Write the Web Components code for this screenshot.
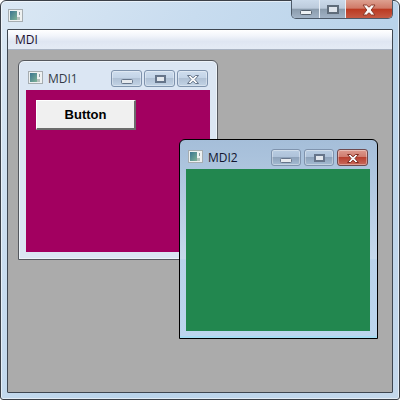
<!DOCTYPE html>
<html>
<head>
<meta charset="utf-8">
<title>MDI</title>
<style>
    html, body { margin: 0; padding: 0; background: #ffffff; }
    body { width: 400px; height: 400px; overflow: hidden; font-family: "Open Sans", sans-serif; }
</style>
</head>
<body>
<app-window>
    <menu-bar slot="menu">MDI</menu-bar>
    <mdi-child title-text="MDI1" x="18" y="60" color="#a20060" state="inactive">
        <push-button>Button</push-button>
    </mdi-child>
    <mdi-child title-text="MDI2" x="179" y="139" color="#22874f" state="active"></mdi-child>
</app-window>

<script>
const iconTemplate = document.createElement('template');
iconTemplate.innerHTML = /*html*/`
    <style>
        :host { display: block; width: 15px; height: 13px; }
        svg { display: block; }
    </style>
    <svg width="15" height="13" viewBox="0 0 15 13">
        <defs>
            <linearGradient id="g" x1="0" y1="0" x2="1" y2="1">
                <stop offset="0" stop-color="#3a7590"/>
                <stop offset="1" stop-color="#7fb296"/>
            </linearGradient>
        </defs>
        <rect x="0.5" y="0.5" width="14" height="12" fill="#eef1f1" stroke="#a6adb1"/>
        <rect x="2" y="2" width="7" height="9" fill="url(#g)"/>
        <rect x="9" y="8" width="3" height="3" fill="#b4c1bd"/>
        <rect x="11" y="3" width="1" height="3" fill="#8a99a0"/>
    </svg>
`;
class AppIcon extends HTMLElement {
    constructor() {
        super();
        this.attachShadow({ mode: 'open' });
        this.shadowRoot.appendChild(iconTemplate.content.cloneNode(true));
    }
}
customElements.define('app-icon', AppIcon);

const glyphs = {
    min: (c) => `<rect x="8.500" y="7.500" width="11" height="4" rx="1" fill="#e6eaee" stroke="${c}"/>`,
    max: (c) => `<rect x="9" y="3" width="11" height="8" fill="${c}"/><rect x="11" y="5" width="7" height="4" fill="#e2e7ed"/>`,
    close: (c) => `<path d="M8.500 3.500h3l2.500 2.200 2.500-2.200h3l-3.500 4 3.500 4h-3l-2.500-2.200-2.500 2.200h-3l3.500-4z" fill="#f7f8f9" stroke="${c}" stroke-width="1"/>`
};

const capButtonTemplate = document.createElement('template');
capButtonTemplate.innerHTML = /*html*/`
    <style>
        :host {
            display: flex;
            align-items: center;
            justify-content: center;
            box-sizing: border-box;
            height: 17px;
            width: 31px;
            border: 1px solid #7f93ad;
            border-radius: 3px;
            box-shadow: inset 0 0 0 1px rgba(255,255,255,0.35);
            background: linear-gradient(#cfdeee 0, #c3d4e7 45%, #b0c1d5 50%, #c2d3e5 100%);
        }
        :host([state="active"]) {
            width: 30px;
            background: linear-gradient(#b9cde2 0, #aec2d9 45%, #8ea3bb 50%, #a4bbd2 100%);
        }
        :host([kind="close"][state="active"]) {
            width: 31px;
            border-color: #6e4a4f;
            background: linear-gradient(#dd9a8e 0, #cf7b6e 45%, #b8402f 50%, #c96a5c 100%);
        }
        svg { display: block; }
    </style>
    <svg width="28" height="14" viewBox="0 0 28 14"></svg>
`;
class CapButton extends HTMLElement {
    constructor() {
        super();
        this.attachShadow({ mode: 'open' });
        this.shadowRoot.appendChild(capButtonTemplate.content.cloneNode(true));
    }
    connectedCallback() {
        const kind = this.getAttribute('kind');
        const active = this.getAttribute('state') === 'active';
        const stroke = kind === 'close' && active ? '#7d2a20' : '#66758a';
        this.shadowRoot.querySelector('svg').innerHTML = glyphs[kind](stroke);
    }
}
customElements.define('cap-button', CapButton);

const menuTemplate = document.createElement('template');
menuTemplate.innerHTML = /*html*/`
    <style>
        :host {
            display: flex;
            align-items: center;
            box-sizing: border-box;
            height: 20px;
            padding: 0 7px 1px;
            font: 12px "Open Sans", sans-serif;
            color: #1a1030;
            border-bottom: 1px solid #a9b3c2;
            background: linear-gradient(#ffffff 0, #f2f5fb 30%, #dfe6f2 60%, #e4ebf5 100%);
        }
    </style>
    <slot></slot>
`;
class MenuBar extends HTMLElement {
    constructor() {
        super();
        this.attachShadow({ mode: 'open' });
        this.shadowRoot.appendChild(menuTemplate.content.cloneNode(true));
    }
}
customElements.define('menu-bar', MenuBar);

const buttonTemplate = document.createElement('template');
buttonTemplate.innerHTML = /*html*/`
    <style>
        :host {
            display: flex;
            align-items: center;
            justify-content: center;
            box-sizing: border-box;
            width: 100px;
            height: 30px;
            font: bold 13px "Liberation Sans", sans-serif;
            color: #000000;
            background: #f0f0f0;
            border: 1px solid;
            border-color: #ffffff #6b6b6b #6b6b6b #ffffff;
            border-width: 1px 2px 2px 1px;
        }
    </style>
    <slot></slot>
`;
class PushButton extends HTMLElement {
    constructor() {
        super();
        this.attachShadow({ mode: 'open' });
        this.shadowRoot.appendChild(buttonTemplate.content.cloneNode(true));
    }
}
customElements.define('push-button', PushButton);

const childTemplate = document.createElement('template');
childTemplate.innerHTML = /*html*/`
    <style>
        :host {
            position: absolute;
            display: flex;
            flex-direction: column;
            box-sizing: border-box;
            width: 200px;
            height: 200px;
            border: 1px solid #55585e;
            border-radius: 6px 6px 0 0;
            background: #dbe6f3;
            box-shadow: inset 0 0 0 1px rgba(255,255,255,0.5);
        }
        :host([state="active"]) {
            border-color: #000000;
            width: 199px;
            background: linear-gradient(#a5bed9 0, #c6d9ec 60%, #b9d2ea 60.5%, #bcd6ee 100%);
            box-shadow: inset 0 -2px 0 #a6dcf2;
        }
        .title {
            display: flex;
            align-items: flex-start;
            height: 29px;
            flex: none;
            padding: 0 9px 0 9px;
            box-sizing: border-box;
            font: 12px "Open Sans", sans-serif;
            color: #333b47;
        }
        :host([state="active"]) .title { color: #12162e; padding: 0 9px 0 8px; }
        app-icon { margin-top: 10px; }
        .label { margin-left: 5px; margin-top: 9px; line-height: 17px; }
        .buttons { display: flex; margin-left: auto; gap: 2px; margin-top: 9px; }
        :host([state="active"]) .buttons { gap: 3px; }
        .client {
            flex: none;
            height: 162px;
            margin: 0 7px;
            padding: 10px;
            box-sizing: border-box;
        }
        :host([state="active"]) .client { margin: 0 7px 0 6px; }
    </style>
    <div class="title">
        <app-icon></app-icon>
        <span class="label"></span>
        <div class="buttons"></div>
    </div>
    <div class="client"><slot></slot></div>
`;
class MdiChild extends HTMLElement {
    constructor() {
        super();
        this.attachShadow({ mode: 'open' });
        this.shadowRoot.appendChild(childTemplate.content.cloneNode(true));
    }
    connectedCallback() {
        // free canvas: attributes hold page coordinates, the mdi area starts at 8,50
        this.style.left = (this.getAttribute('x') - 8) + 'px';
        this.style.top = (this.getAttribute('y') - 50) + 'px';
        const state = this.getAttribute('state');
        const root = this.shadowRoot;
        root.querySelector('.label').textContent = this.getAttribute('title-text');
        root.querySelector('.client').style.background = this.getAttribute('color');
        ['min', 'max', 'close'].forEach((kind) => {
            const b = document.createElement('cap-button');
            b.setAttribute('kind', kind);
            b.setAttribute('state', state);
            root.querySelector('.buttons').appendChild(b);
        });
    }
}
customElements.define('mdi-child', MdiChild);

const windowTemplate = document.createElement('template');
windowTemplate.innerHTML = /*html*/`
    <style>
        :host {
            display: flex;
            flex-direction: column;
            box-sizing: border-box;
            width: 400px;
            height: 400px;
            border: 1px solid #3b4048;
            border-radius: 6px 6px 3px 3px;
            background: linear-gradient(125deg, #dbe8f4 0, #c8dcef 30%, #b9d3ea 60%, #c4d8ec 100%);
            box-shadow: inset 0 0 0 1px rgba(255,255,255,0.55);
        }
        .caption {
            flex: none;
            display: flex;
            align-items: flex-start;
            height: 28px;
            padding-left: 7px;
        }
        .icon { margin-top: 8px; }
        .controls {
            display: flex;
            margin-left: auto;
            margin-right: 6px;
            height: 19px;
            margin-top: -1px;
            border: 1px solid #4d5a69;
            border-top: none;
            border-radius: 0 0 5px 5px;
            overflow: hidden;
            box-sizing: border-box;
        }
        .ctl {
            display: flex;
            align-items: center;
            justify-content: center;
            box-sizing: border-box;
            height: 100%;
            padding-top: 1px;
            background: linear-gradient(#cbdaea 0, #bccbdc 45%, #8b9cad 52%, #a2b3c6 100%);
            border-right: 1px solid #e8eef5;
        }
        .ctl.min { width: 28px; padding-top: 7px; }
        .ctl.max { width: 26px; }
        .ctl.close {
            width: 46px;
            border-right: none;
            background: linear-gradient(#dda090 0, #d07a68 45%, #bb3a22 52%, #c55a44 100%);
        }
        .client {
            flex: 1;
            display: flex;
            flex-direction: column;
            margin: 0 6px 6px;
            border: 1px solid #3e4650;
            border-radius: 1px;
            min-height: 0;
        }
        .mdi {
            flex: 1;
            position: relative;
            background: #ababab;
        }
    </style>
    <div class="caption">
        <app-icon class="icon"></app-icon>
        <div class="controls">
            <div class="ctl min"><svg width="14" height="6" viewBox="0 0 14 6"><rect x="1.500" y="0.500" width="11" height="4" rx="1" fill="#eef1f4" stroke="#55606c"/></svg></div>
            <div class="ctl max"><svg width="14" height="11" viewBox="0 0 14 11"><rect x="1" y="1" width="12" height="9" fill="#5f6c7a"/><rect x="3" y="3" width="8" height="5" fill="#dfe5ec"/></svg></div>
            <div class="ctl close"><svg width="14" height="12" viewBox="0 0 14 12"><path d="M1 1h3.500L7 3.200 9.500 1H13L9.200 6 13 11H9.500L7 8.800 4.500 11H1l3.800-5z" fill="#fbf9f8" stroke="#8a3a2a"/></svg></div>
        </div>
    </div>
    <div class="client">
        <slot name="menu"></slot>
        <div class="mdi"><slot></slot></div>
    </div>
`;
class AppWindow extends HTMLElement {
    constructor() {
        super();
        this.attachShadow({ mode: 'open' });
        this.shadowRoot.appendChild(windowTemplate.content.cloneNode(true));
    }
}
customElements.define('app-window', AppWindow);
</script>
</body>
</html>
